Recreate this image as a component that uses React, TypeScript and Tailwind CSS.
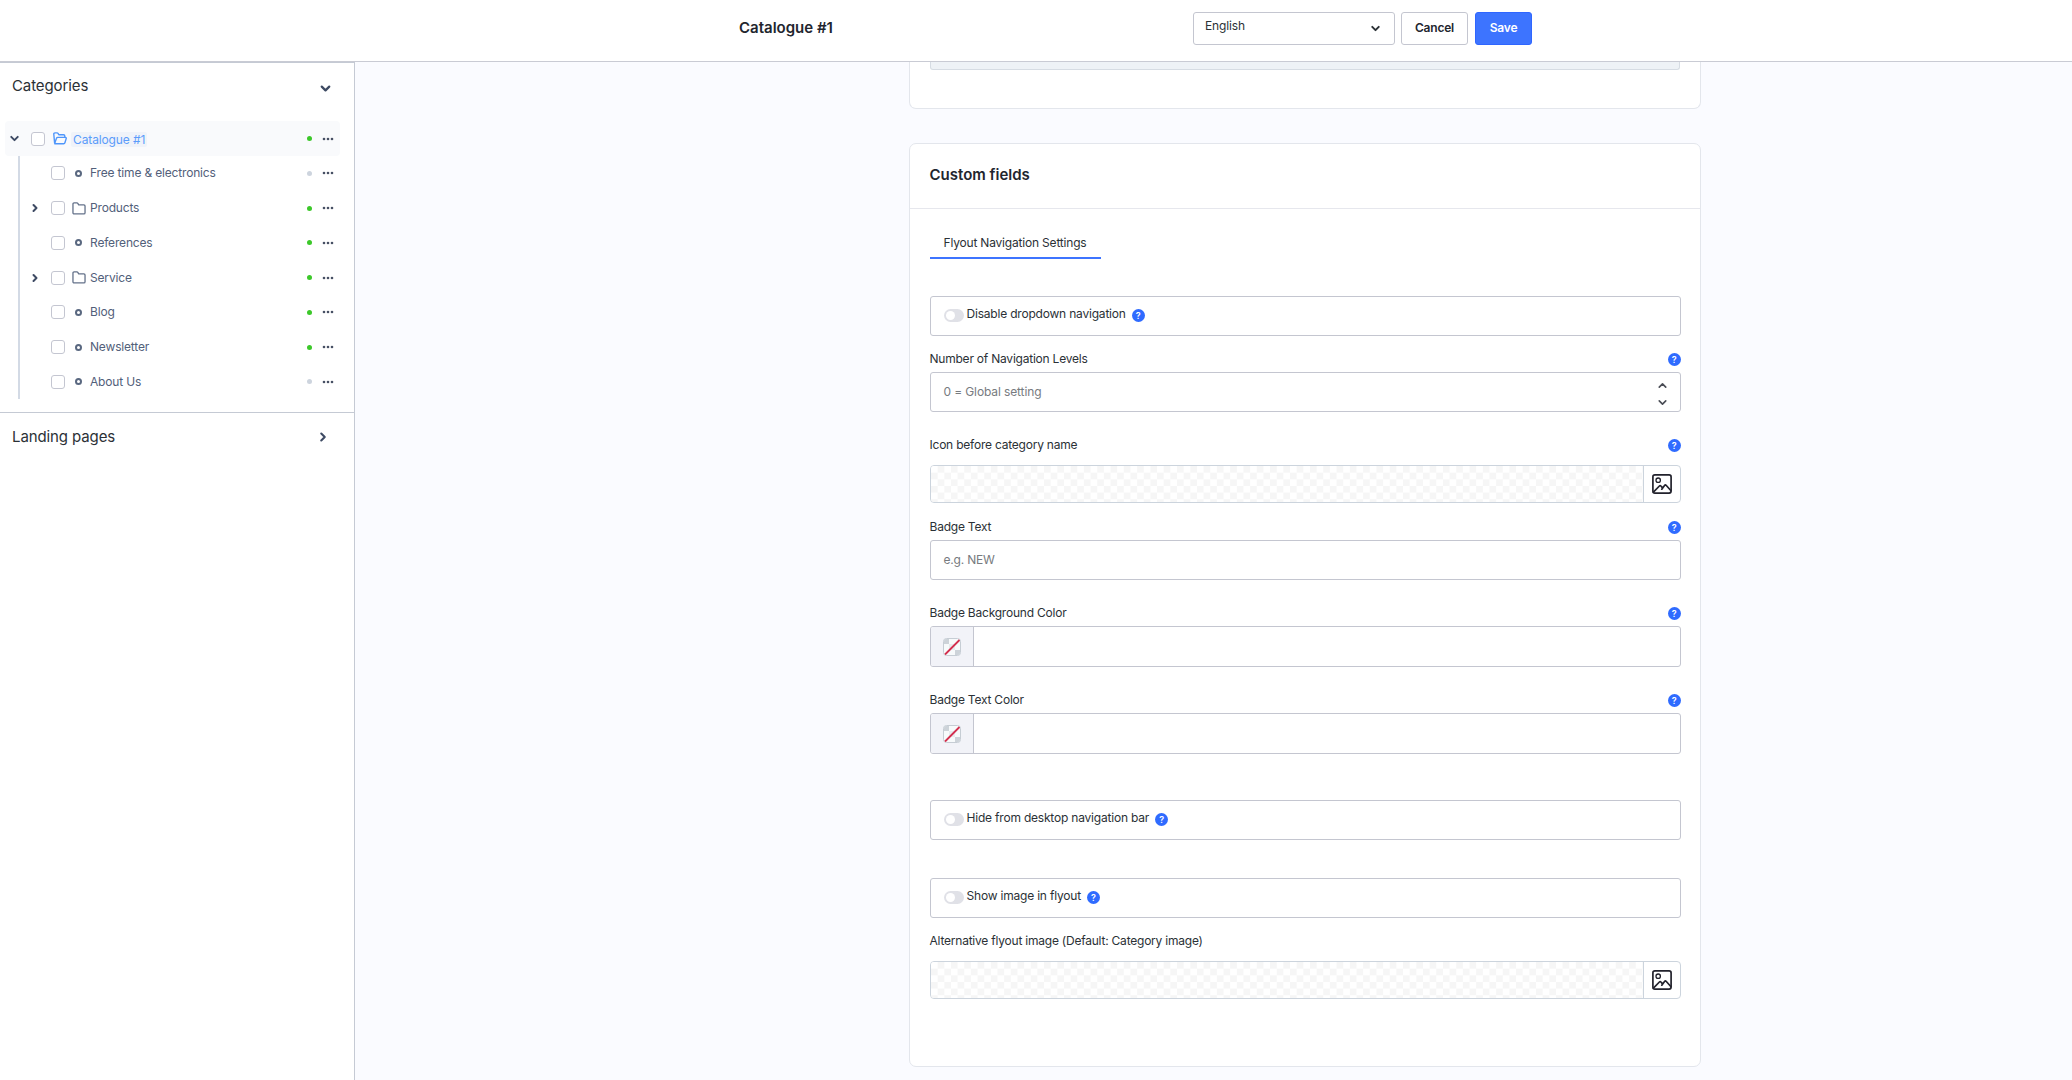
import React from 'react';
import { ChevronDown, ChevronRight, ChevronUp } from 'lucide-react';

type TreeItem = { label: string; folder?: boolean; active: boolean };

const categories: TreeItem[] = [
  { label: 'Free time & electronics', active: false },
  { label: 'Products', folder: true, active: true },
  { label: 'References', active: true },
  { label: 'Service', folder: true, active: true },
  { label: 'Blog', active: true },
  { label: 'Newsletter', active: true },
  { label: 'About Us', active: false },
];

const FolderIcon = () => (
  <svg width="14" height="13" viewBox="0 0 15 14" fill="none" stroke="#64728a" strokeWidth="1.4" strokeLinejoin="round">
    <path d="M1 2.2C1 1.4 1.5.9 2.2.9h3.1c.4 0 .7.2.9.5l1 1.7h5.6c.7 0 1.2.5 1.2 1.2v7.2c0 .8-.5 1.3-1.2 1.3H2.2c-.7 0-1.2-.5-1.2-1.3z" />
  </svg>
);

const OpenFolderIcon = () => (
  <svg width="14" height="13" viewBox="0 0 14 13" fill="none" stroke="#4f96fb" strokeWidth="1.4" strokeLinejoin="round">
    <path d="M1.6 11 .8 2.3C.7 1.5 1.2.9 2 .9h2.1c.4 0 .7.2.9.5l.8 1.3h4.7c.8 0 1.3.5 1.3 1.2v1.5" />
    <path d="M1.7 11.2 3.5 6.3c.2-.6.6-.9 1.2-.9h7.6c.7 0 1.1.5.9 1.2l-1.3 4.2c-.2.7-.7 1-1.3 1H2.2c-.4 0-.7-.2-.5-.6z" />
  </svg>
);

const ImageIcon = () => (
  <svg width="20" height="20" viewBox="0 0 20 20" fill="none" stroke="#22222c" strokeWidth="1.7" strokeLinejoin="round" strokeLinecap="round">
    <rect x="0.9" y="0.9" width="18.2" height="18.2" rx="2" />
    <circle cx="6.2" cy="6.2" r="2.2" strokeWidth="1.3" />
    <path d="M1.4 18.2 7.4 12c.5-.5 1-.5 1.5 0l1.4 1.6M9.8 15.2l2.9-3.9c.4-.5.9-.5 1.4 0l4.7 5.2" />
  </svg>
);

const Dots = () => (
  <svg width="12" height="4" viewBox="0 0 12 4" fill="#475064">
    <circle cx="2" cy="2" r="1.3" />
    <circle cx="6" cy="2" r="1.3" />
    <circle cx="10" cy="2" r="1.3" />
  </svg>
);

const Help = () => (
  <span className="flex size-[13px] shrink-0 items-center justify-center rounded-full bg-[#2f6bff] text-[9px] leading-none font-semibold text-white">
    ?
  </span>
);

const Checkbox = () => <span className="size-[14px] shrink-0 rounded-[3px] border border-[#c4c6d1] bg-white" />;

const Status = ({ active }: { active: boolean }) => (
  <span className={`size-[5px] shrink-0 rounded-full ${active ? 'bg-[#3cc82a]' : 'bg-[#cdd4de]'}`} />
);

const TreeRow = ({ item }: { item: TreeItem }) => (
  <div className="flex h-[34.75px] items-center pr-[6px]">
    <span className="flex w-[31px] justify-center pr-[1px]">
      {item.folder && <ChevronRight size={12} strokeWidth={4} className="text-[#3d4a63]" />}
    </span>
    <Checkbox />
    <span className="ml-[5px] flex w-[18px] justify-center">
      {item.folder ? <FolderIcon /> : <span className="mr-[1px] size-[7px] rounded-full border-2 border-[#5a6880]" />}
    </span>
    <span className="ml-[2px] flex-1 text-[12px] tracking-[-0.17px] text-[#52607a]">{item.label}</span>
    <Status active={item.active} />
    <span className="ml-[10px]">
      <Dots />
    </span>
  </div>
);

const Label = ({ text, help = true, className = '' }: { text: string; help?: boolean; className?: string }) => (
  <div className={`flex h-[14px] items-center justify-between text-[12px] tracking-[-0.22px] text-[#2b3136] ${className}`}>
    <span>{text}</span>
    {help && <Help />}
  </div>
);

const SwitchBox = ({ text, className = '' }: { text: string; className?: string }) => (
  <div className={`flex h-[40px] items-center rounded-[3px] border border-[#c4c6d0] px-[13px] pb-[1px] ${className}`}>
    <span className="flex h-[13px] w-[20px] items-center rounded-full bg-[#e0e1e7] p-[2px]">
      <span className="size-[9px] rounded-full bg-white" />
    </span>
    <span className="ml-[3px] pb-[3px] text-[12px] tracking-[-0.2px] text-[#2b3136]">{text}</span>
    <span className="ml-[6px]">
      <Help />
    </span>
  </div>
);

const MediaField = ({ className = '' }: { className?: string }) => (
  <div className={`flex h-[38px] overflow-hidden rounded-[4px] border border-[#ccd4dd] ${className}`}>
    <div className="flex-1 bg-[repeating-conic-gradient(#f6f6f6_0_25%,#ffffff_0_50%)] bg-[length:13.3px_13.3px]" />
    <button className="flex w-[37px] items-center justify-center border-l border-[#ccd4dd]">
      <ImageIcon />
    </button>
  </div>
);

const ColorField = ({ className = '' }: { className?: string }) => (
  <div className={`flex h-[41px] overflow-hidden rounded-[3px] border border-[#c4c6d0] ${className}`}>
    <div className="flex w-[43px] items-center justify-center border-r border-[#c4c6d0] bg-[#f2f3f8]">
      <svg width="18" height="18" viewBox="0 0 18 18">
        <rect x="0.5" y="0.5" width="17" height="17" rx="3" fill="#f7fafb" stroke="#c6cdd4" />
        <path d="M1 6V3a2 2 0 0 1 2-2h3v5zM12 12h5v3a2 2 0 0 1-2 2h-3z" fill="#cdd3d9" />
        <path d="M6 6h6v6H6z" fill="#e7ebee" />
        <path d="M2 16.5 16.5 2" stroke="#d3304f" strokeWidth="1.8" />
      </svg>
    </div>
  </div>
);

export default function App() {
  return (
    <div className="flex h-[1080px] w-[2072px] flex-col overflow-hidden bg-[#fafbff] font-['Inter',sans-serif]">
      <header className="flex h-[62px] shrink-0 items-center border-b border-[#c9cbd4] bg-white pb-[5px] pl-[739px]">
        <h1 className="w-[454px] text-[15px] font-semibold text-[#22252e]">Catalogue #1</h1>
        <div className="flex h-[33px] w-[202px] items-center justify-between rounded-[3px] border border-[#c4c6d0] pr-[12px] pl-[11px] text-[12px] tracking-[-0.15px] text-[#2b3136]">
          <span className="pb-[4px]">English</span>
          <ChevronDown size={13} strokeWidth={3.6} />
        </div>
        <button className="ml-[6px] h-[33px] w-[67px] rounded-[3px] border border-[#c4c6d0] text-[12px] font-semibold tracking-[-0.2px] text-[#22252e]">
          Cancel
        </button>
        <button className="ml-[7px] h-[33px] w-[57px] rounded-[3px] border border-[#2f66ff] bg-[#3d74ff] text-[12px] font-semibold tracking-[-0.2px] text-white">
          Save
        </button>
      </header>

      <div className="flex min-h-0 flex-1">
        <aside className="w-[355px] shrink-0 border-t border-r border-[#c5cad4] bg-white">
          <div className="flex h-[58px] items-start justify-between pt-[12px] pr-[21px] pl-[12px] text-[15px] tracking-[-0.1px] text-[#2b3136]">
            <span>Categories</span>
            <ChevronDown size={15} strokeWidth={3.6} className="mt-[6px] text-[#3d4a63]" />
          </div>
          <div className="pr-[14px] pl-[5px]">
            <div className="flex h-[35px] items-center rounded-[4px] bg-[#f9fafc] pr-[6px]">
              <span className="flex w-[26px] pl-[3px]">
                <ChevronDown size={13} strokeWidth={3.6} className="text-[#3d4a63]" />
              </span>
              <Checkbox />
              <span className="ml-[8px]">
                <OpenFolderIcon />
              </span>
              <span className="mt-[2px] ml-[4px] rounded-[2px] bg-[#f0f3f9] px-[2px] text-[12px] leading-[15px] tracking-[-0.12px] text-[#5b9cfb]">
                Catalogue #1
              </span>
              <span className="flex-1" />
              <Status active />
              <span className="ml-[10px]">
                <Dots />
              </span>
            </div>
            <div className="ml-[13px] border-l-2 border-[#d3dae5]">
              {categories.map((item) => (
                <TreeRow key={item.label} item={item} />
              ))}
            </div>
          </div>
          <div className="mt-[13px] flex h-[49px] items-center justify-between border-t border-[#c5cad4] pr-[24px] pl-[12px] text-[15px] tracking-[-0.1px] text-[#2b3136]">
            <span>Landing pages</span>
            <ChevronRight size={14} strokeWidth={3.6} className="text-[#3d4a63]" />
          </div>
        </aside>

        <main className="min-w-0 flex-1 pl-[554px]">
          <section className="h-[47px] w-[792px] rounded-b-[7px] border border-t-0 border-[#e3e6ec] bg-white px-[20px]">
            <div className="h-[8px] rounded-b-[3px] border border-t-0 border-[#d6dce3] bg-[#eef2f6]" />
          </section>

          <section className="mt-[34px] h-[924px] w-[792px] rounded-[7px] border border-[#e3e6ec] bg-white">
            <h2 className="flex h-[65px] items-center border-b border-[#e6e7ed] px-[19.5px] pb-[2px] text-[15px] font-semibold text-[#22252e]">
              Custom fields
            </h2>
            <div className="px-[19.5px] pt-[20px]">
              <div className="flex">
                <span className="h-[30px] w-[171px] border-b-2 border-[#3d74ff] px-[14px] pt-[5px] text-[12px] tracking-[-0.19px] whitespace-nowrap text-[#2b3136]">
                  Flyout Navigation Settings
                </span>
              </div>

              <SwitchBox text="Disable dropdown navigation" className="mt-[37px]" />

              <Label text="Number of Navigation Levels" className="mt-[16px]" />
              <div className="mt-[6px] flex h-[40px] items-center justify-between rounded-[3px] border border-[#c4c6d0] pr-[11px] pl-[13px] text-[12px] tracking-[-0.12px] text-[#777b80]">
                <span>0 = Global setting</span>
                <span className="flex flex-col gap-[4px] pt-[3px] text-[#4a4d55]">
                  <ChevronUp size={13} strokeWidth={3} />
                  <ChevronDown size={13} strokeWidth={3} />
                </span>
              </div>

              <Label text="Icon before category name" className="mt-[26px]" />
              <MediaField className="mt-[13px]" />

              <Label text="Badge Text" className="mt-[17px]" />
              <div className="mt-[6px] flex h-[40px] items-center rounded-[3px] border border-[#c4c6d0] px-[13px] text-[12px] tracking-[-0.2px] text-[#777b80]">
                e.g. NEW
              </div>

              <Label text="Badge Background Color" className="mt-[26px]" />
              <ColorField className="mt-[6px]" />

              <Label text="Badge Text Color" className="mt-[26px]" />
              <ColorField className="mt-[6px]" />

              <SwitchBox text="Hide from desktop navigation bar" className="mt-[46px]" />
              <SwitchBox text="Show image in flyout" className="mt-[38px]" />

              <Label text="Alternative flyout image (Default: Category image)" help={false} className="mt-[16px]" />
              <MediaField className="mt-[13px]" />
            </div>
          </section>
        </main>
      </div>
    </div>
  );
}
